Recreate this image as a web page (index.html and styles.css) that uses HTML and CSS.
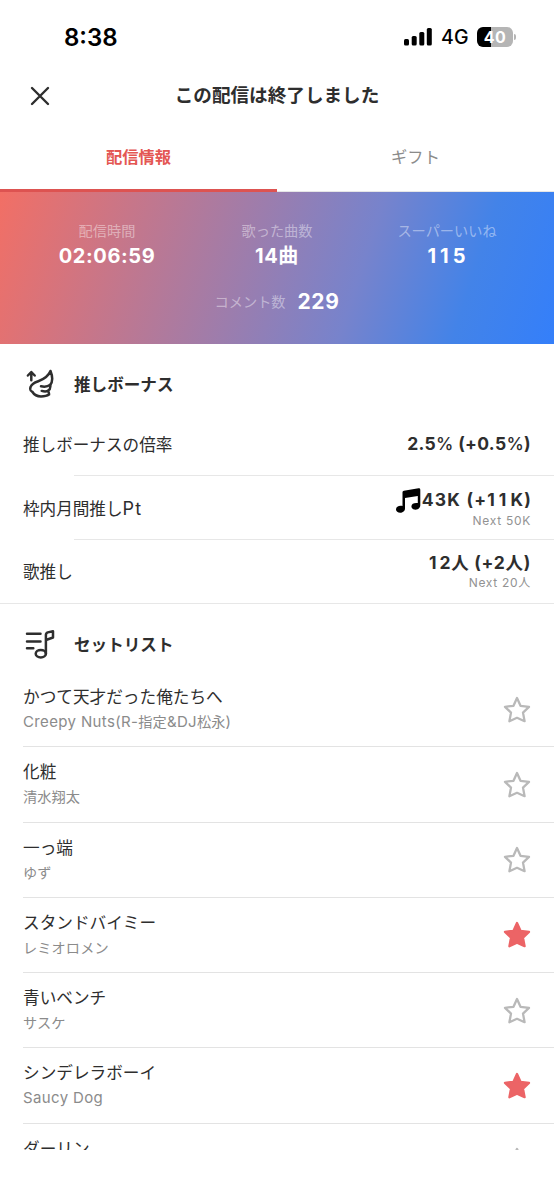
FILE: index.html
```html
<!DOCTYPE html>
<html lang="ja">
<head>
<meta charset="utf-8">
<title>配信情報</title>
<link rel="stylesheet" href="styles.css">
</head>
<body>
<svg class="defs" width="0" height="0" aria-hidden="true">
  <symbol id="star" viewBox="0 0 28 28"><path d="M14 2 L17.500 9.800 L26 10.800 L20 16.600 L21.600 25.200 L14 21.800 L6.400 25.200 L8 16.600 L2 10.800 L10.500 9.800 Z" stroke-width="2.300" stroke-linejoin="round"/></symbol>
</svg>
<div class="screen">
  <header class="status">
    <span class="clock">8:38</span>
    <div class="status-right">
      <svg class="signal" width="28" height="18" viewBox="0 0 28 18"><rect x="0" y="11" width="5" height="6.6" rx="1.5"/><rect x="7.7" y="8" width="5" height="9.6" rx="1.5"/><rect x="15.3" y="4" width="5" height="13.6" rx="1.5"/><rect x="22.8" y="0" width="5" height="17.6" rx="1.5"/></svg>
      <span class="network">4G</span>
      <div class="battery"><span class="level">40</span><i class="cap"></i></div>
    </div>
  </header>
  <div class="titlebar">
    <svg class="close" width="20" height="20" viewBox="0 0 20 20"><path d="M2 2 L18 18 M18 2 L2 18"/></svg>
    <h1>この配信は終了しました</h1>
  </div>
  <nav class="tabs"><a class="tab active">配信情報</a><a class="tab">ギフト</a></nav>
  <section class="summary">
    <div class="stats">
      <div class="stat"><span class="label">配信時間</span><b>02:06:59</b></div>
      <div class="stat"><span class="label">歌った曲数</span><b>14曲</b></div>
      <div class="stat"><span class="label">スーパーいいね</span><b class="likes">115</b></div>
    </div>
    <div class="comments"><span class="label">コメント数</span><b class="count">229</b></div>
  </section>
  <section class="bonus">
    <div class="section-head">
      <svg class="icon" width="32" height="32" viewBox="0 0 32 32"><path d="M8.300 12.300 V4.500 M4.900 7.500 L8.300 4 L11.700 7.500"/><path d="M27.500 3 C25.500 8 20 11.500 15.300 13.200 C11.500 14.500 8.500 16 7.600 19 C6.600 22 7.300 23 9.500 24 C11 26.500 14 28.400 18 28.400 C21 28.400 24 28 26 26.600 C26.300 25.500 25.700 24 25 22.800 M27.500 3 C29.700 8.500 29.500 14 27.200 17 C27.700 19.500 27 21.500 25 22.800"/><path d="M18 18.300 C21 19 25 18.500 27.300 16.800 M18.700 22.900 C21 23.500 23.500 23.500 25 22.800"/></svg>
      <h2>推しボーナス</h2>
    </div>
    <div class="row"><span class="name">推しボーナスの倍率</span><div class="value"><b class="v1">2.5<i class="pct">%</i> (+0.5<i class="pct">%</i>)</b></div></div>
    <div class="row"><span class="name">枠内月間推し<span class="unit">Pt</span></span><div class="value"><b class="v2"><svg class="note" width="26" height="25" viewBox="0 0 26 25"><path d="M7.500 4.300 Q7.500 3 8.900 2.700 L23.500 0.300 Q25.300 0 25.300 1.700 V17.300 C25.300 20 23 21.700 20.500 21.700 C18.200 21.700 16.400 20.500 16.400 18.500 C16.400 15.500 19.500 14.500 22.800 15 V8 L10 10 V20.500 C10 23.200 7.700 24.700 5.200 24.700 C2.800 24.700 1 23.500 1 21.500 C1 18.500 4.200 17.300 7.500 18 Z"/></svg>43K (+<i class="ones">11</i>K)</b><small>Next 50K</small></div></div>
    <div class="row"><span class="name">歌推し</span><div class="value"><b class="v3"><i class="ones">1</i>2人 (+2人)</b><small>Next 20人</small></div></div>
  </section>
  <section class="setlist">
    <div class="section-head">
      <svg class="icon" width="32" height="32" viewBox="0 0 32 32"><path d="M4 5.700 H17.500 M4 13.500 H17.500 M4 20.300 H10.300"/><ellipse cx="17.800" cy="25.700" rx="5.100" ry="3.700"/><path d="M22.900 25.700 V7 Q22.900 5 24.800 4.400 L30 3.200 V9.500 L23 12"/></svg>
      <h2>セットリスト</h2>
    </div>
    <ul>
      <li class="song"><div><p class="track">かつて天才だった俺たちへ</p><p class="artist"><span class="latin">Creepy Nuts(R-</span>指定<span class="latin">&amp;DJ</span>松永<span class="latin">)</span></p></div><svg class="star"><use href="#star"/></svg></li>
      <li class="song"><div><p class="track">化粧</p><p class="artist">清水翔太</p></div><svg class="star"><use href="#star"/></svg></li>
      <li class="song"><div><p class="track">一っ端</p><p class="artist">ゆず</p></div><svg class="star"><use href="#star"/></svg></li>
      <li class="song"><div><p class="track">スタンドバイミー</p><p class="artist">レミオロメン</p></div><svg class="star on"><use href="#star"/></svg></li>
      <li class="song"><div><p class="track">青いベンチ</p><p class="artist">サスケ</p></div><svg class="star"><use href="#star"/></svg></li>
      <li class="song"><div><p class="track">シンデレラボーイ</p><p class="artist"><span class="latin">Saucy Dog</span></p></div><svg class="star on"><use href="#star"/></svg></li>
      <li class="song"><div><p class="track">ダーリン</p></div><svg class="star"><use href="#star"/></svg></li>
    </ul>
  </section>
</div>
</body>
</html>
```
FILE: styles.css
```css
* { box-sizing: border-box; margin: 0; padding: 0; }
body { background: #fff; color: #2e2e2e; font-family: Inter, "Noto Sans CJK JP", sans-serif; }
.defs { position: absolute; }
.screen { width: 554px; height: 1150px; overflow: hidden; }
.status { height: 74px; padding: 0 38px 0 64px; display: flex; justify-content: space-between; align-items: center; color: #000; }
.clock { font-size: 24px; font-weight: 600; }
.status-right { display: flex; align-items: center; }
.signal { margin-right: 9px; }
.network { font-size: 19.5px; letter-spacing: 0.2px; width: 36px; font-weight: 500; }
.battery { display: flex; align-items: center; gap: 1px; }
.level { width: 36px; height: 20px; border-radius: 6px; background: linear-gradient(90deg, #000 40%, #b5b5b5 40%); color: #fff; font-size: 16px; font-weight: 700; line-height: 20px; text-align: center; letter-spacing: 0.5px; }
.cap { width: 2px; height: 6px; border-radius: 0 2px 2px 0; background: #b5b5b5; }
.titlebar { height: 44px; display: grid; grid-template-columns: 60px 1fr 60px; align-items: center; }
.close { margin-left: 30px; fill: none; stroke: #2e2e2e; stroke-width: 2.4; stroke-linecap: round; }
h1 { font-size: 18.6px; line-height: 42px; font-weight: 700; text-align: center; padding-bottom: 2px; }
.tabs { height: 74px; display: grid; grid-template-columns: 1fr 1fr; }
.tab { font-size: 16.3px; line-height: 64px; padding-top: 7px; text-align: center; color: #8b8b8b; font-weight: 400; border-bottom: 1px solid #e6e6e6; }
.active { color: #e45753; font-weight: 700; border-bottom: 3px solid #dd5351; }
.summary { height: 152px; padding-top: 27px; color: #fff; background: linear-gradient(108deg, #f26f65 0%, #7783cc 64%, #4383e8 83%, #347ffa 100%); }
.stats { display: grid; grid-template-columns: repeat(3, 170px); justify-content: center; }
.stat { display: flex; flex-direction: column; align-items: center; }
.label { font-size: 14.2px; line-height: 24px; color: rgba(255,255,255,.43); }
.summary b { font-size: 20px; line-height: 27px; letter-spacing: 0.6px; font-weight: 700; }
.summary .likes { letter-spacing: 4px; margin-right: -3px; }
.summary .count { font-size: 21px; }
.comments { margin-top: 18px; display: flex; justify-content: center; align-items: center; gap: 12px; }
.section-head { display: flex; align-items: flex-start; gap: 19px; padding-left: 23px; }
.bonus .section-head { height: 68px; padding-top: 24px; }
.icon { fill: none; stroke: #2e2e2e; stroke-width: 2.5; stroke-linecap: round; stroke-linejoin: round; }
h2 { font-size: 16.6px; line-height: 34px; font-weight: 700; }
.bonus { border-bottom: 1px solid #e7e7e7; }
.row { height: 64px; padding: 0 23px; display: flex; justify-content: space-between; align-items: center; background: linear-gradient(#e7e7e7, #e7e7e7) 74px 100% / 480px 1px no-repeat; }
.row:last-child { height: 63px; padding-bottom: 1px; background: none; }
.name { font-size: 16.6px; }
.unit { font-size: 18px; letter-spacing: 1.2px; }
.value { display: flex; flex-direction: column; align-items: flex-end; }
.value b { display: flex; align-items: center; white-space: pre; font-size: 17.5px; line-height: 24px; font-weight: 700; letter-spacing: 0.7px; }
.value .v1 { letter-spacing: 0.3px; }
.value .v2 { letter-spacing: 1.2px; margin-right: -1px; }
.pct { font-style: normal; font-weight: 500; }
.ones { font-style: normal; letter-spacing: 4px; }
.value .v3 .ones { letter-spacing: 3px; }
.value small { font-size: 12px; line-height: 16px; letter-spacing: 0.7px; color: #929292; }
.note { fill: #000; margin-right: 1px; }
.setlist .section-head { height: 68px; padding-top: 24px; }
ul { list-style: none; padding-left: 23px; }
.song { height: 75.3px; padding: 13px 23px 0 0; display: flex; justify-content: space-between; align-items: flex-start; border-bottom: 1px solid #e3e3e3; }
.track { font-size: 16.65px; line-height: 25px; }
.artist { font-size: 14.2px; line-height: 24px; color: #8b8b8b; letter-spacing: 0.1px; }
.latin { font-size: 15px; letter-spacing: 0.36px; }
.star { width: 28px; height: 28px; margin-top: 10.5px; fill: none; stroke: #b9b9b9; }
.on { fill: #ec6466; stroke: #ec6466; }
```
